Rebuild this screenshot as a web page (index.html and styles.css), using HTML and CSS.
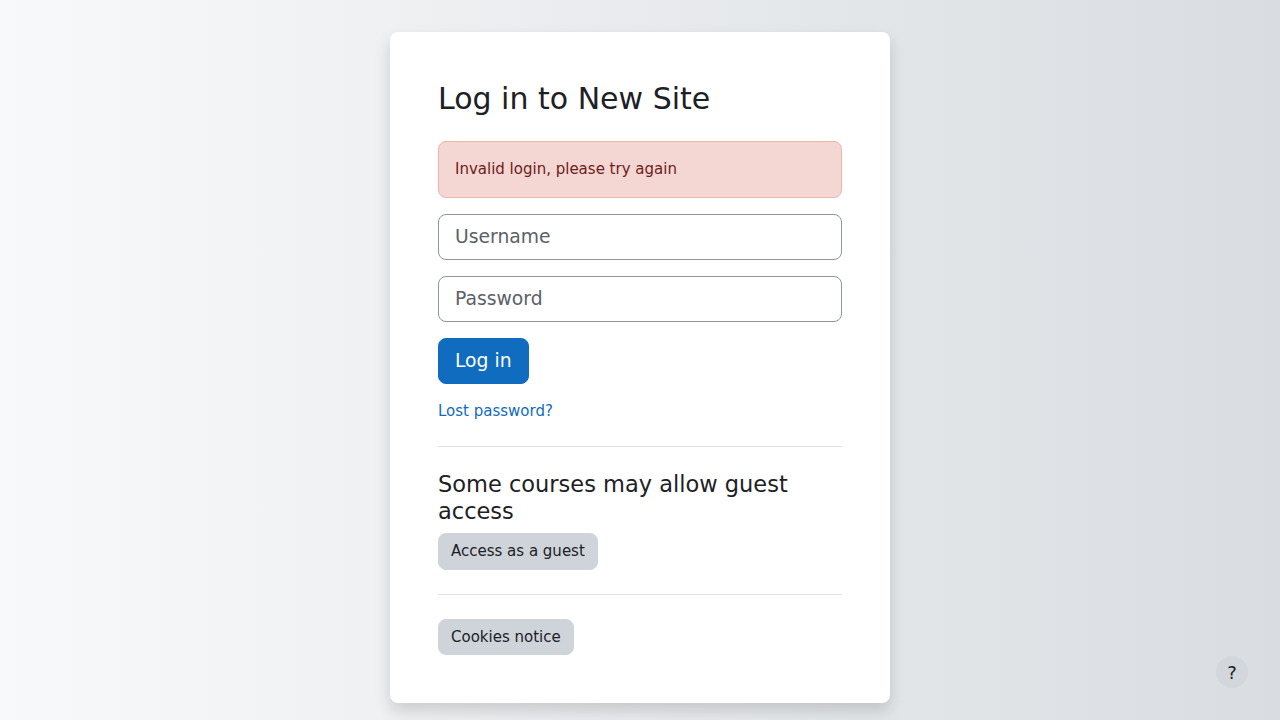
FILE: index.html
```html
<!DOCTYPE html>
<html lang="en">
<head>
<meta charset="utf-8">
<title>Log in to New Site</title>
<link rel="stylesheet" href="styles.css">
</head>
<body>
<main class="login-wrap">
  <section class="login-card">
    <h1 class="login-heading">Log in to New Site</h1>
    <div class="alert-danger" role="alert">Invalid login, please try again</div>
    <form class="login-form">
      <input class="form-input" type="text" placeholder="Username">
      <input class="form-input" type="password" placeholder="Password">
      <button class="btn-primary" type="button">Log in</button>
    </form>
    <a class="lost-link" href="#">Lost password?</a>
    <hr class="divider">
    <h2 class="guest-heading">Some courses may allow guest access</h2>
    <button class="btn-secondary" type="button">Access as a guest</button>
    <hr class="divider">
    <button class="btn-secondary" type="button">Cookies notice</button>
  </section>
</main>
<button class="help-btn" type="button">?</button>
</body>
</html>
```
FILE: styles.css
```css
html, body {
  margin: 0;
  padding: 0;
  height: 100%;
}
body {
  font-family: "DejaVu Sans", "Liberation Sans", sans-serif;
  font-size: 15px;
  line-height: 1.5;
  color: #1d2125;
  background: linear-gradient(to right, #f8f9fa 0%, #d9dde1 100%);
  overflow: hidden;
}
.login-wrap {
  display: flex;
  justify-content: center;
  padding-top: 32px;
}
.login-card {
  width: 500px;
  box-sizing: border-box;
  background: #fff;
  border-radius: 8px;
  padding: 48px;
  box-shadow: 0 8px 16px rgba(0, 0, 0, 0.15);
}
.login-heading {
  font-size: 30px;
  font-weight: 400;
  line-height: 38px;
  margin: 0 0 23px;
  color: #1d2125;
}
.alert-danger {
  background: #f4d6d2;
  border: 1px solid #eeb4ab;
  color: #6e211a;
  border-radius: 8px;
  padding: 16px;
  line-height: 22.5px;
  height: 22.5px;
  margin-bottom: 16px;
}
.login-form {
  display: flex;
  flex-direction: column;
  align-items: flex-start;
  gap: 16px;
}
.form-input {
  width: 100%;
  box-sizing: border-box;
  height: 46px;
  font-family: inherit;
  font-size: 18.75px;
  color: #1d2125;
  padding: 0 16px;
  border: 1px solid #8f959e;
  border-radius: 8px;
  background: #fff;
  margin: 0;
}
.form-input::placeholder {
  color: #5b6167;
}
.btn-primary {
  font-family: inherit;
  font-size: 18.75px;
  height: 46px;
  padding: 0 16px;
  background: #0f6cbf;
  color: #fff;
  border: 1px solid #0f6cbf;
  border-radius: 8px;
}
.lost-link {
  display: block;
  margin-top: 16px;
  color: #0f6cbf;
  text-decoration: none;
  font-size: 15px;
  line-height: 22.5px;
  width: max-content;
}
.divider {
  border: 0;
  border-top: 1px solid #dee2e6;
  margin: 24px 0;
}
.guest-heading {
  font-size: 22.5px;
  font-weight: 400;
  line-height: 1.2;
  margin: 0 0 8px;
  color: #1d2125;
}
.btn-secondary {
  display: block;
  font-family: inherit;
  font-size: 15px;
  line-height: 22.5px;
  padding: 6px 12px;
  background: #ced4da;
  color: #1d2125;
  border: 1px solid #ced4da;
  border-radius: 8px;
}
.help-btn {
  position: fixed;
  right: 32px;
  bottom: 32px;
  width: 32px;
  height: 32px;
  border-radius: 50%;
  border: 0;
  background: #d3d7dc;
  color: #1d2125;
  font-family: inherit;
  font-size: 18px;
  padding: 0;
  display: flex;
  align-items: center;
  justify-content: center;
}
```
